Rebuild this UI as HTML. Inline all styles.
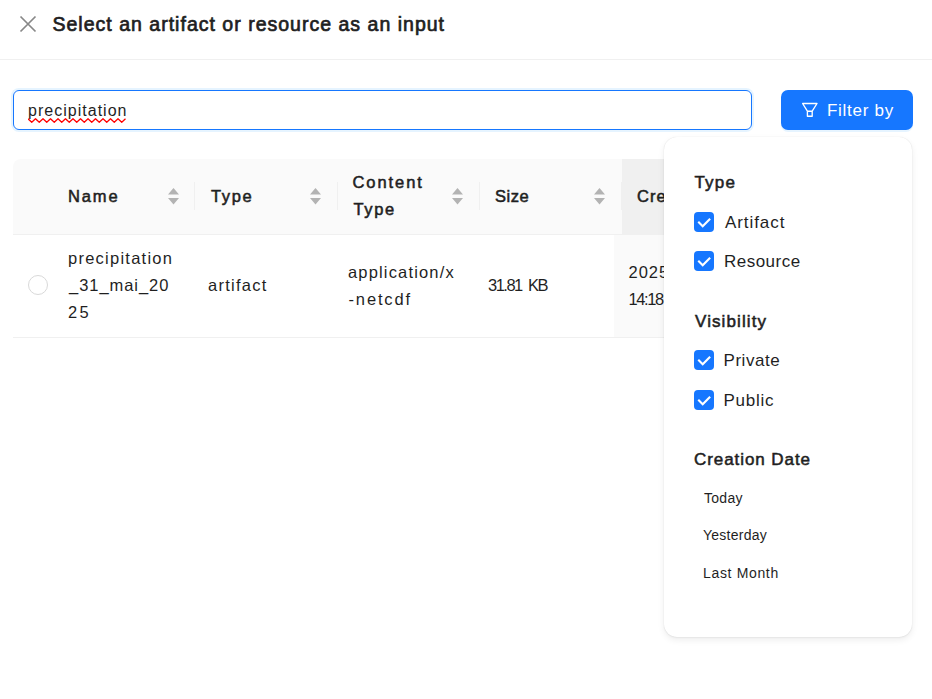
<!DOCTYPE html>
<html><head><meta charset="utf-8">
<style>
*{box-sizing:border-box;margin:0;padding:0}
html,body{width:932px;height:699px;overflow:hidden;background:#fff;font-family:"Liberation Sans",sans-serif;color:#1f1f1f}
.a{position:absolute;white-space:nowrap}
.bl{display:inline-block;width:0;height:0;vertical-align:baseline}
.divider{left:0;top:59px;width:932px;height:1px;background:#f0f0f0}
.input{left:13px;top:90px;width:739px;height:40px;border:1px solid #1677ff;border-radius:6px;box-shadow:0 0 0 2px rgba(5,145,255,0.1)}
.btn{left:781px;top:90px;width:132px;height:40px;background:#1677ff;border-radius:7px;box-shadow:0 2px 0 rgba(5,145,255,0.1)}
.thead{left:13px;top:159px;width:899px;height:76px;background:#fafafa;border-top-left-radius:8px;border-bottom:1px solid #f0f0f0}
.sorted-h{left:622px;top:159px;width:290px;height:76px;background:#f0f0f0;border-bottom:1px solid #f0f0f0}
.sorted-b{left:614px;top:235px;width:298px;height:102px;background:#fafafa}
.rowline{left:13px;top:337px;width:899px;height:1px;background:#f0f0f0}
.sep{top:182px;width:1px;height:28px;background:#f0f0f0}
.sort{width:12px;height:17px}
.radio{left:28px;top:275px;width:20px;height:20px;border:1px solid #d9d9d9;border-radius:50%;background:#fff}
.pop{left:664px;top:136.5px;width:248px;height:500.5px;background:#fff;border-radius:13px;box-shadow:0 0 1px rgba(0,0,0,0.14),0 3px 7px rgba(0,0,0,0.07),0 1px 2px rgba(0,0,0,0.04)}
.cb{width:20px;height:20px;background:#1677ff;border-radius:4px}
</style></head><body>
<svg class="a deco" style="left:19px;top:15px" width="18" height="18" viewBox="0 0 18 18"><path d="M1.5 1.5 L16.5 16.5 M16.5 1.5 L1.5 16.5" stroke="#888" stroke-width="1.7" fill="none"/></svg>
<div class="a divider deco"></div>
<div class="a input deco"></div>
<svg class="a deco" style="left:28px;top:118px" width="98" height="6" viewBox="0 0 98 6"><path d="M0 0.8 L3.75 4.2 L7.50 0.8 L11.25 4.2 L15.00 0.8 L18.75 4.2 L22.50 0.8 L26.25 4.2 L30.00 0.8 L33.75 4.2 L37.50 0.8 L41.25 4.2 L45.00 0.8 L48.75 4.2 L52.50 0.8 L56.25 4.2 L60.00 0.8 L63.75 4.2 L67.50 0.8 L71.25 4.2 L75.00 0.8 L78.75 4.2 L82.50 0.8 L86.25 4.2 L90.00 0.8 L93.75 4.2 L97.50 0.8" stroke="#f00" stroke-width="1.3" fill="none" stroke-linejoin="round"/></svg>
<div class="a btn"></div>
<svg class="a" style="left:801px;top:102px" width="18" height="16" viewBox="0 0 18 16"><path d="M1.6 1.5 H16 L11.2 9.2 H6.4 Z M6.4 9.2 V14.2 H11.2 V9.2" stroke="#fff" stroke-width="1.35" fill="none" stroke-linejoin="round"/></svg>
<div class="a thead deco"></div>
<div class="a sorted-h deco"></div>
<div class="a sorted-b deco"></div>
<div class="a rowline deco"></div>
<div class="a sep deco" style="left:194px"></div>
<div class="a sep deco" style="left:337px"></div>
<div class="a sep deco" style="left:479px"></div>
<div class="a sep deco" style="left:621px"></div>
<svg class="a sort deco" style="left:168px;top:188px" viewBox="0 0 12 17"><path d="M5.5 0 L11 6.5 H0 Z M0 10 H11 L5.5 16.5 Z" fill="#b3b3b3"/></svg>
<svg class="a sort deco" style="left:310px;top:188px" viewBox="0 0 12 17"><path d="M5.5 0 L11 6.5 H0 Z M0 10 H11 L5.5 16.5 Z" fill="#b3b3b3"/></svg>
<svg class="a sort deco" style="left:452px;top:188px" viewBox="0 0 12 17"><path d="M5.5 0 L11 6.5 H0 Z M0 10 H11 L5.5 16.5 Z" fill="#b3b3b3"/></svg>
<svg class="a sort deco" style="left:594px;top:188px" viewBox="0 0 12 17"><path d="M5.5 0 L11 6.5 H0 Z M0 10 H11 L5.5 16.5 Z" fill="#b3b3b3"/></svg>
<div class="a radio deco"></div>
<div class="a" id="title" style="left:52.5px;top:12px;font-size:19.5px;line-height:24px;font-weight:normal;-webkit-text-stroke:0.7px #1f1f1f;color:#1f1f1f;letter-spacing:1.01px"><span class="bl"></span>Select an artifact or resource as an input</div>
<div class="a" id="hName" style="left:68.0px;top:183px;font-size:16.5px;line-height:27px;font-weight:normal;-webkit-text-stroke:0.55px #1f1f1f;color:#1f1f1f;letter-spacing:1.88px"><span class="bl"></span>Name</div>
<div class="a" id="hType" style="left:211.0px;top:183px;font-size:16.5px;line-height:27px;font-weight:normal;-webkit-text-stroke:0.55px #1f1f1f;color:#1f1f1f;letter-spacing:1.63px"><span class="bl"></span>Type</div>
<div class="a" id="hContent" style="left:352.5px;top:169px;font-size:16.5px;line-height:27px;font-weight:normal;-webkit-text-stroke:0.55px #1f1f1f;color:#1f1f1f;letter-spacing:1.92px"><span class="bl"></span>Content</div>
<div class="a" id="hType2" style="left:353.5px;top:196px;font-size:16.5px;line-height:27px;font-weight:normal;-webkit-text-stroke:0.55px #1f1f1f;color:#1f1f1f;letter-spacing:1.62px"><span class="bl"></span>Type</div>
<div class="a" id="hSize" style="left:495.0px;top:183px;font-size:16.5px;line-height:27px;font-weight:normal;-webkit-text-stroke:0.55px #1f1f1f;color:#1f1f1f;letter-spacing:0.55px"><span class="bl"></span>Size</div>
<div class="a" id="hCreated" style="left:637.0px;top:183px;font-size:16.5px;line-height:27px;font-weight:normal;-webkit-text-stroke:0.55px #1f1f1f;color:#1f1f1f;letter-spacing:1.10px"><span class="bl"></span>Created</div>
<div class="a" id="b1" style="left:68.0px;top:245px;font-size:16.5px;line-height:27px;color:#1f1f1f;letter-spacing:1.25px"><span class="bl"></span>precipitation</div>
<div class="a" id="b2" style="left:69.0px;top:272px;font-size:16.5px;line-height:27px;color:#1f1f1f;letter-spacing:0.95px"><span class="bl"></span>_31_mai_20</div>
<div class="a" id="b3" style="left:68.0px;top:299px;font-size:16.5px;line-height:27px;color:#1f1f1f;letter-spacing:2.25px"><span class="bl"></span>25</div>
<div class="a" id="bType" style="left:208.0px;top:272px;font-size:16.5px;line-height:27px;color:#1f1f1f;letter-spacing:1.25px"><span class="bl"></span>artifact</div>
<div class="a" id="bCT1" style="left:348.0px;top:259px;font-size:16.5px;line-height:27px;color:#1f1f1f;letter-spacing:1.16px"><span class="bl"></span>application/x</div>
<div class="a" id="bCT2" style="left:348.5px;top:286px;font-size:16.5px;line-height:27px;color:#1f1f1f;letter-spacing:1.86px"><span class="bl"></span>-netcdf</div>
<div class="a" id="bSizeA" style="left:488.0px;top:272px;font-size:16.5px;line-height:27px;color:#1f1f1f;letter-spacing:-1.51px"><span class="bl"></span>31.81</div>
<div class="a" id="bSizeB" style="left:528.0px;top:272px;font-size:16.5px;line-height:27px;color:#1f1f1f;letter-spacing:-1.40px"><span class="bl"></span>KB</div>
<div class="a" id="bDate1" style="left:628.5px;top:259px;font-size:16.5px;line-height:27px;color:#1f1f1f;letter-spacing:1.00px"><span class="bl"></span>2025-05-31</div>
<div class="a" id="bDate2" style="left:628.5px;top:286px;font-size:16.5px;line-height:27px;color:#1f1f1f;letter-spacing:-1.38px"><span class="bl"></span>14:18</div>
<div class="a" id="inp" style="left:28.0px;top:101px;font-size:16px;line-height:20px;color:#1f1f1f;letter-spacing:1.02px"><span class="bl"></span>precipitation</div>
<div class="a" id="btn" style="left:827.0px;top:101px;font-size:17px;line-height:20px;color:#ffffff;letter-spacing:0.71px"><span class="bl"></span>Filter by</div>
<div class="a pop deco"></div>
<div class="a cb deco" style="left:694px;top:212px"><svg width="20" height="20" viewBox="0 0 20 20" style="display:block"><path d="M5 10.6 L8.7 14.3 L15.4 7.4" stroke="#fff" stroke-width="2.1" fill="none" stroke-linecap="square"/></svg></div>
<div class="a cb deco" style="left:694px;top:251px"><svg width="20" height="20" viewBox="0 0 20 20" style="display:block"><path d="M5 10.6 L8.7 14.3 L15.4 7.4" stroke="#fff" stroke-width="2.1" fill="none" stroke-linecap="square"/></svg></div>
<div class="a cb deco" style="left:694px;top:350px"><svg width="20" height="20" viewBox="0 0 20 20" style="display:block"><path d="M5 10.6 L8.7 14.3 L15.4 7.4" stroke="#fff" stroke-width="2.1" fill="none" stroke-linecap="square"/></svg></div>
<div class="a cb deco" style="left:694px;top:390px"><svg width="20" height="20" viewBox="0 0 20 20" style="display:block"><path d="M5 10.6 L8.7 14.3 L15.4 7.4" stroke="#fff" stroke-width="2.1" fill="none" stroke-linecap="square"/></svg></div>
<div class="a" id="pType" style="left:694.5px;top:172px;font-size:17px;line-height:22px;font-weight:normal;-webkit-text-stroke:0.55px #1f1f1f;color:#1f1f1f;letter-spacing:1.17px"><span class="bl"></span>Type</div>
<div class="a" id="pArt" style="left:725.0px;top:212px;font-size:17px;line-height:22px;color:#1f1f1f;letter-spacing:0.93px"><span class="bl"></span>Artifact</div>
<div class="a" id="pRes" style="left:724.0px;top:251px;font-size:17px;line-height:22px;color:#1f1f1f;letter-spacing:0.48px"><span class="bl"></span>Resource</div>
<div class="a" id="pVis" style="left:695.0px;top:311px;font-size:17px;line-height:22px;font-weight:normal;-webkit-text-stroke:0.55px #1f1f1f;color:#1f1f1f;letter-spacing:1.10px"><span class="bl"></span>Visibility</div>
<div class="a" id="pPri" style="left:723.5px;top:350px;font-size:17px;line-height:22px;color:#1f1f1f;letter-spacing:0.55px"><span class="bl"></span>Private</div>
<div class="a" id="pPub" style="left:723.5px;top:390px;font-size:17px;line-height:22px;color:#1f1f1f;letter-spacing:0.74px"><span class="bl"></span>Public</div>
<div class="a" id="pCD" style="left:694.0px;top:449px;font-size:17px;line-height:22px;font-weight:normal;-webkit-text-stroke:0.55px #1f1f1f;color:#1f1f1f;letter-spacing:0.93px"><span class="bl"></span>Creation Date</div>
<div class="a" id="dToday" style="left:704.0px;top:488px;font-size:14px;line-height:20px;color:#1f1f1f;letter-spacing:0.27px"><span class="bl"></span>Today</div>
<div class="a" id="dYest" style="left:703.0px;top:525px;font-size:14px;line-height:20px;color:#1f1f1f;letter-spacing:0.26px"><span class="bl"></span>Yesterday</div>
<div class="a" id="dLast" style="left:703.0px;top:563px;font-size:14px;line-height:20px;color:#1f1f1f;letter-spacing:0.66px"><span class="bl"></span>Last Month</div>
</body></html>
